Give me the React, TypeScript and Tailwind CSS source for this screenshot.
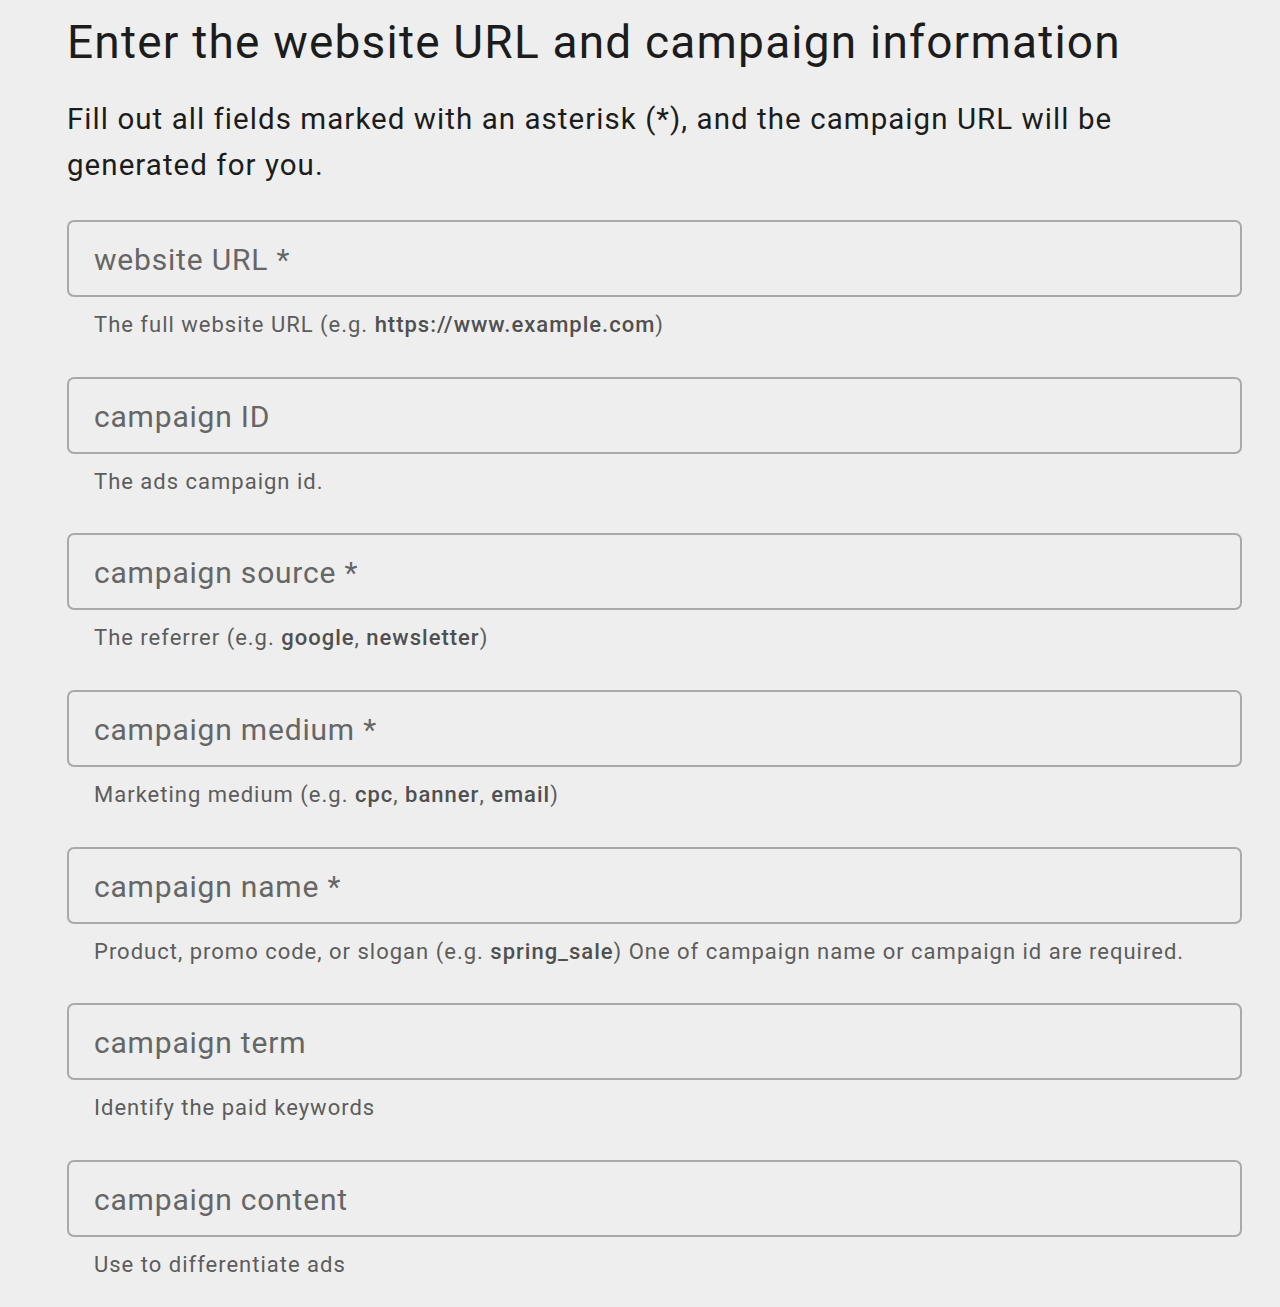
import React from 'react';

type Field = {
  label: string;
  help: React.ReactNode;
};

const B = ({ children }: { children: React.ReactNode }) => (
  <span className="font-medium text-[#505050]">{children}</span>
);

const fields: Field[] = [
  {
    label: 'website URL *',
    help: (
      <>
        The full website URL (e.g. <B>https://www.example.com</B>)
      </>
    ),
  },
  { label: 'campaign ID', help: 'The ads campaign id.' },
  {
    label: 'campaign source *',
    help: (
      <>
        The referrer (e.g. <B>google</B>, <B>newsletter</B>)
      </>
    ),
  },
  {
    label: 'campaign medium *',
    help: (
      <>
        Marketing medium (e.g. <B>cpc</B>, <B>banner</B>, <B>email</B>)
      </>
    ),
  },
  {
    label: 'campaign name *',
    help: (
      <>
        Product, promo code, or slogan (e.g. <B>spring_sale</B>) One of campaign name or campaign id are
        required.
      </>
    ),
  },
  { label: 'campaign term', help: 'Identify the paid keywords' },
  { label: 'campaign content', help: 'Use to differentiate ads' },
];

export default function App() {
  return (
    <div className="min-h-[1307px] bg-[#eeeeee] pl-[67px] pr-[38px] pt-[14px] font-['Roboto',sans-serif]">
      <h1 className="text-[46px] leading-[56px] tracking-[1.2px] text-[#1c1c1c]">
        Enter the website URL and campaign information
      </h1>
      <p className="mt-[26px] text-[29.5px] leading-[46px] tracking-[1.05px] text-[#1c1c1c] pr-[100px]">
        Fill out all fields marked with an asterisk (*), and the campaign URL will be generated for you.
      </p>

      <div className="mt-[32px] flex flex-col">
        {fields.map((f) => (
          <div key={f.label} className="h-[156.67px]">
            <div className="flex h-[77px] items-center rounded-[7px] border-2 border-[#a9a9a9] px-[25px] pt-[2px]">
              <span className="text-[30px] tracking-[0.8px] text-[#666666]">{f.label}</span>
            </div>
            <div className="mt-[14px] pl-[27px] text-[22px] leading-[28px] tracking-[1px] text-[#5c5c5c]">{f.help}</div>
          </div>
        ))}
      </div>
    </div>
  );
}
